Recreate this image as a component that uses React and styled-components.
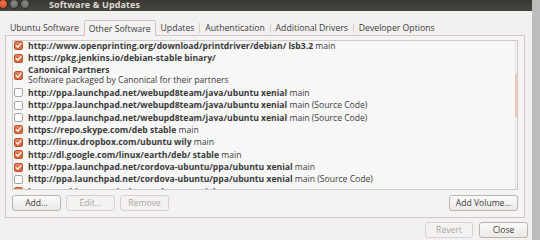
import React from "react";
import styled, { createGlobalStyle } from "styled-components";

const GlobalStyle = createGlobalStyle`
  html, body { margin: 0; padding: 0; }
  body {
    font-family: "Open Sans", "DejaVu Sans", sans-serif;
    background: #a3a3a3;
  }
`;

const Screen = styled.div`
  width: 540px;
  height: 240px;
  overflow: hidden;
  display: flex;
  background: linear-gradient(to right, #8f8f8f, #bcbcbc);
`;

const Window = styled.div`
  width: 532px;
  height: 240px;
  flex: none;
  display: flex;
  flex-direction: column;
  background: #f2f1f0;
`;

const TitleBar = styled.div`
  height: 11px;
  flex: none;
  display: flex;
  align-items: center;
  background: linear-gradient(#3a3935, #46443f);
  box-sizing: border-box;
  overflow: hidden;
`;

const Controls = styled.div`
  display: flex;
  margin-left: -2px;
  margin-top: -3px;
`;

const Dot = styled.span`
  width: 8px;
  height: 8px;
  margin-right: 1px;
  border-radius: 50%;
  background: ${(p) =>
    p.$red
      ? "radial-gradient(circle at 50% 40%, #f0744a, #c9471c)"
      : "radial-gradient(circle at 50% 40%, #8b8a85, #5d5c57)"};
  border: 0.5px solid #2e2d2a;
`;

const Title = styled.span`
  margin-left: 18px;
  margin-top: -1px;
  font-size: 9px;
  line-height: 10px;
  font-weight: 700;
  color: #dfdbd2;
  letter-spacing: 0.1px;
`;

const Body = styled.div`
  flex: 1;
  display: flex;
  flex-direction: column;
  padding: 9px 7px 0 5px;
`;

const TabBar = styled.div`
  display: flex;
  height: 15px;
  align-items: stretch;
  position: relative;
  z-index: 1;
`;

const Tab = styled.div`
  display: flex;
  align-items: center;
  padding: 0 ${(p) => (p.$active ? "4px" : "4.9px")};
  font-size: 8.7px;
  color: #3c3c3c;
  white-space: nowrap;
  box-sizing: border-box;
  ${(p) =>
    p.$active &&
    `
    background: #f4f3f2;
    border: 1px solid #cdc9c4;
    border-bottom: none;
    border-radius: 2px 2px 0 0;
    margin-bottom: -1px;
    height: 16px;
  `}
`;

const Sep = styled.span`
  width: 1px;
  height: 10px;
  align-self: center;
  margin-top: 1px;
  background: #d3cfca;
`;

const Page = styled.div`
  height: 183px;
  box-sizing: border-box;
  border: 1px solid #cdc9c4;
  background: #f4f3f2;
  display: flex;
  flex-direction: column;
  padding: 4px 6px 6px 6px;
`;

const ListBox = styled.div`
  flex: 1;
  min-height: 0;
  border: 1px solid #cfccc7;
  background: #f7f7f7;
  overflow: hidden;
  position: relative;
`;

const Rows = styled.div`
  margin-top: -1.5px;
`;

const Row = styled.div`
  display: flex;
  align-items: center;
  padding: 1.2px 0 1.2px 1px;
  line-height: 10px;
  font-size: 8.6px;
  color: #3a3a3a;
  white-space: nowrap;
`;

const Check = styled.span`
  width: 9px;
  height: 9px;
  flex: none;
  box-sizing: border-box;
  border-radius: 2px;
  margin-right: 5px;
  display: flex;
  align-items: center;
  justify-content: center;
  border: 1px solid ${(p) => (p.$on ? "#b9532c" : "#a9a6a0")};
  background: ${(p) => (p.$on ? "linear-gradient(#ef8159, #d8643a)" : "#ffffff")};
`;

const Texts = styled.div`
  display: flex;
  flex-direction: column;
`;

const Line = styled.div`
  height: 10px;
  line-height: 10px;
  font-weight: ${(p) => (p.$bold ? 700 : 400)};
`;

const Strong = styled.span`
  font-weight: 700;
`;

const ScrollTrack = styled.div`
  position: absolute;
  right: 1px;
  top: 0;
  bottom: 0;
  width: 1px;
  background: #e2e0dc;
`;

const ScrollThumb = styled.div`
  position: absolute;
  right: 0px;
  top: 33px;
  width: 2px;
  height: 43px;
  background: #f1c9ba;
`;

const ButtonRow = styled.div`
  display: flex;
  gap: 5px;
  margin-top: 5px;
  height: 16px;
`;

const Button = styled.button`
  font-family: inherit;
  font-size: 8.6px;
  height: 16px;
  width: ${(p) => p.$w}px;
  padding: 0;
  box-sizing: border-box;
  border-radius: 3px;
  border: 1px solid ${(p) => (p.disabled ? "#d6d3ce" : "#b9b5af")};
  background: ${(p) => (p.disabled ? "#f3f2f0" : "linear-gradient(#fbfbfa, #ebe9e6)")};
  color: ${(p) => (p.disabled ? "#aaa7a2" : "#3c3c3c")};
  margin-left: ${(p) => (p.$push ? "auto" : "0")};
`;

const ActionBar = styled.div`
  display: flex;
  justify-content: flex-end;
  gap: 6px;
  padding: 4px 0 0 0;
  margin-right: -3px;
`;

const CheckMark = () => (
  <svg width="7" height="7" viewBox="0 0 7 7">
    <path
      d="M1.2 3.6 L2.9 5.2 L5.9 1.6"
      fill="none"
      stroke="#fff"
      strokeWidth="1.3"
      strokeLinecap="round"
      strokeLinejoin="round"
    />
  </svg>
);

const rows = [
  { on: true, b: "http://www.openprinting.org/download/printdriver/debian/ lsb3.2", r: "main" },
  { on: true, b: "https://pkg.jenkins.io/debian-stable binary/", r: "" },
  { on: true, b: "Canonical Partners", sub: "Software packaged by Canonical for their partners" },
  { on: false, b: "http://ppa.launchpad.net/webupd8team/java/ubuntu xenial", r: "main" },
  { on: false, b: "http://ppa.launchpad.net/webupd8team/java/ubuntu xenial", r: "main (Source Code)" },
  { on: false, b: "http://ppa.launchpad.net/webupd8team/java/ubuntu xenial", r: "main (Source Code)" },
  { on: true, b: "https://repo.skype.com/deb stable", r: "main" },
  { on: true, b: "http://linux.dropbox.com/ubuntu wily", r: "main" },
  { on: true, b: "http://dl.google.com/linux/earth/deb/ stable", r: "main" },
  { on: true, b: "http://ppa.launchpad.net/cordova-ubuntu/ppa/ubuntu xenial", r: "main" },
  { on: false, b: "http://ppa.launchpad.net/cordova-ubuntu/ppa/ubuntu xenial", r: "main (Source Code)" },
  { on: true, b: "http://archive.canonical.com/ubuntu xenial", r: "partner" },
];

const tabs = ["Ubuntu Software", "Other Software", "Updates", "Authentication", "Additional Drivers", "Developer Options"];

export default function App() {
  return (
    <>
      <GlobalStyle />
      <Screen>
        <Window>
          <TitleBar>
            <Controls>
              <Dot $red />
              <Dot />
              <Dot />
            </Controls>
            <Title>Software &amp; Updates</Title>
          </TitleBar>
          <Body>
            <TabBar>
              {tabs.map((t, i) => (
                <React.Fragment key={t}>
                  {i > 2 && <Sep />}
                  <Tab $active={i === 1}>{t}</Tab>
                </React.Fragment>
              ))}
            </TabBar>
            <Page>
              <ListBox>
                <Rows>
                  {rows.map((row, i) => (
                    <Row key={i}>
                      <Check $on={row.on}>{row.on && <CheckMark />}</Check>
                      {row.sub ? (
                        <Texts>
                          <Line $bold>{row.b}</Line>
                          <Line>{row.sub}</Line>
                        </Texts>
                      ) : (
                        <span>
                          <Strong>{row.b}</Strong>
                          {row.r ? " " + row.r : ""}
                        </span>
                      )}
                    </Row>
                  ))}
                </Rows>
                <ScrollTrack />
                <ScrollThumb />
              </ListBox>
              <ButtonRow>
                <Button $w={49}>Add...</Button>
                <Button $w={49} disabled>
                  Edit...
                </Button>
                <Button $w={49} disabled>
                  Remove
                </Button>
                <Button $w={69} $push>
                  Add Volume...
                </Button>
              </ButtonRow>
            </Page>
            <ActionBar>
              <Button $w={48} disabled>
                Revert
              </Button>
              <Button $w={49}>Close</Button>
            </ActionBar>
          </Body>
        </Window>
      </Screen>
    </>
  );
}
